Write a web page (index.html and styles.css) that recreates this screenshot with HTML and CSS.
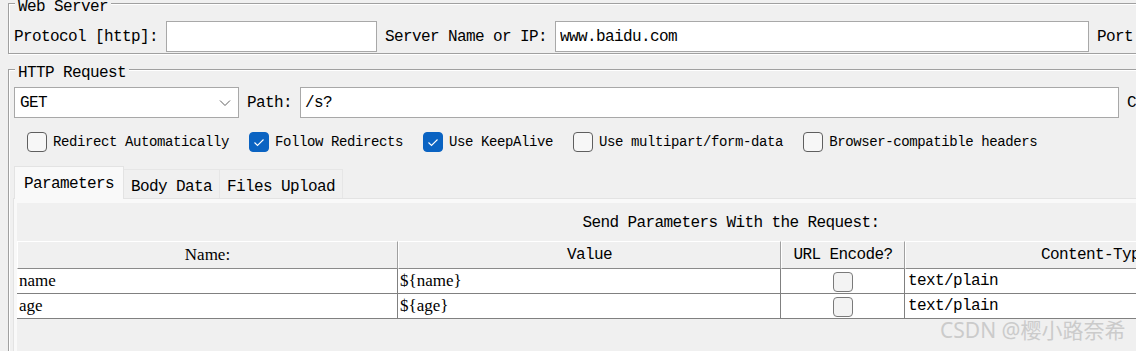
FILE: index.html
```html
<!DOCTYPE html>
<html lang="en">
<head>
    <meta charset="UTF-8">
    <title>HTTP Request</title>
    <link rel="stylesheet" href="styles.css">
</head>
<body>
    <div class="win">
        <!-- Web Server -->
        <div class="group">
            <div class="group-title">Web Server</div>
            <div class="row">
                <span class="lbl">Protocol [http]:</span>
                <input type="text" class="field f-proto" value="">
                <span class="lbl">Server Name or IP:</span>
                <input type="text" class="field f-host" value="www.baidu.com">
                <span class="lbl">Port Number:</span>
                <input type="text" class="field f-port" value="">
            </div>
        </div>

        <!-- HTTP Request -->
        <div class="group group-http">
            <div class="group-title">HTTP Request</div>
            <div class="row">
                <div class="combo">
                    <span>GET</span>
                    <svg class="chev" width="12" height="8" viewBox="0 0 12 8"><path d="M1 1.5 L6 6.5 L11 1.5" fill="none" stroke="#606060" stroke-width="1"/></svg>
                </div>
                <span class="lbl">Path:</span>
                <input type="text" class="field f-path" value="/s?">
                <span class="lbl">Content encoding:</span>
                <input type="text" class="field f-enc" value="">
            </div>

            <div class="checks">
                <span class="check"><span class="box"></span>Redirect Automatically</span>
                <span class="check"><span class="box on"><svg width="18" height="18" viewBox="0 0 18 18"><path d="M4.5 9.5 L7.5 12.5 L13.5 6.5" fill="none" stroke="#fff" stroke-width="1.1"/></svg></span>Follow Redirects</span>
                <span class="check"><span class="box on"><svg width="18" height="18" viewBox="0 0 18 18"><path d="M4.5 9.5 L7.5 12.5 L13.5 6.5" fill="none" stroke="#fff" stroke-width="1.1"/></svg></span>Use KeepAlive</span>
                <span class="check"><span class="box"></span>Use multipart/form-data</span>
                <span class="check"><span class="box"></span>Browser-compatible headers</span>
            </div>

            <div class="tabs">
                <div class="tab active t1">Parameters</div>
                <div class="tab t2">Body Data</div>
                <div class="tab t3">Files Upload</div>
            </div>
            <div class="pane">
                <div class="panel">
                    <div class="panel-title">Send Parameters With the Request:</div>
                    <table class="params">
                        <colgroup>
                            <col style="width: 381px">
                            <col style="width: 383px">
                            <col style="width: 124px">
                            <col style="width: 380px">
                            <col style="width: 160px">
                        </colgroup>
                        <tr>
                            <th class="serif">Name:</th>
                            <th>Value</th>
                            <th>URL Encode?</th>
                            <th>Content-Type</th>
                            <th>Include Equals?</th>
                        </tr>
                        <tr>
                            <td class="serif">name</td>
                            <td class="serif">${name}</td>
                            <td class="mid"><span class="cell-box"></span></td>
                            <td class="mono">text/plain</td>
                            <td class="mid"><span class="cell-box"></span></td>
                        </tr>
                        <tr>
                            <td class="serif">age</td>
                            <td class="serif">${age}</td>
                            <td class="mid"><span class="cell-box"></span></td>
                            <td class="mono">text/plain</td>
                            <td class="mid"><span class="cell-box"></span></td>
                        </tr>
                    </table>
                </div>
            </div>
        </div>

        <div class="watermark">CSDN @樱小路奈希</div>
    </div>
</body>
</html>
```

FILE: styles.css
```css
html, body{
    margin: 0;
    overflow: hidden;
    background: #f0f0f0;
}
body{
    font-family: "Liberation Mono", "DejaVu Sans Mono", monospace;
    font-size: 16px;
    letter-spacing: -0.6px;
    color: #000;
}
.win{
    position: relative;
    width: 1470px;
    padding-top: 3px;
}

/* etched group box */
.group{
    margin-left: 8px;
    border: 1px solid #a0a0a0;
    box-shadow: inset 1px 1px 0 #fff, 1px 1px 0 #fff;
    padding: 0 0 1px 5px;
}
.group-http{
    margin-top: 15px;
    padding-bottom: 80px;
}
.group-title{
    display: table;
    margin: -4px 0 0 1px;
    padding: 0 3px;
    line-height: 14px;
    background: #f0f0f0;
}

.row{
    display: flex;
    align-items: center;
    gap: 8px;
    margin-top: 7px;
    height: 31px;
}
.lbl{
    flex: none;
    white-space: nowrap;
}
.field{
    flex: none;
    box-sizing: border-box;
    height: 31px;
    margin: 0;
    padding: 0 4px;
    border: 1px solid #a8a8a8;
    background: #fff;
    font: inherit;
    letter-spacing: inherit;
    color: #000;
    outline: none;
}
.f-proto{ width: 211px; }
.f-host{ width: 534px; }
.f-port{ width: 120px; }
.f-path{ width: 819px; }
.f-enc{ width: 100px; }

.combo{
    flex: none;
    box-sizing: border-box;
    width: 225px;
    height: 31px;
    border: 1px solid #a8a8a8;
    background: #fff;
    display: flex;
    align-items: center;
    justify-content: space-between;
    padding: 0 7px 0 5px;
}
.chev{
    display: block;
}

/* checkbox row */
.checks{
    display: flex;
    align-items: center;
    height: 20px;
    margin-top: 14px;
    padding-left: 13px;
    font-size: 14px;
    letter-spacing: -0.4px;
}
.check{
    display: flex;
    align-items: center;
    margin-right: 20px;
    white-space: nowrap;
}
.box{
    flex: none;
    box-sizing: border-box;
    width: 20px;
    height: 20px;
    margin-right: 6px;
    border: 1px solid #5f5f5f;
    border-radius: 4px;
    background: #f7f7f7;
}
.box.on{
    background: #0a63c2;
    border-color: #0a63c2;
}
.box svg{
    display: block;
}

/* tabs */
.tabs{
    display: flex;
    align-items: flex-end;
    margin-top: 14px;
}
.tab{
    box-sizing: border-box;
    height: 29px;
    padding-top: 8px;
    line-height: 18px;
    text-align: center;
    border: 1px solid #e6e6e6;
    border-bottom: 0;
    background: #f0f0f0;
}
.tab.active{
    position: relative;
    height: 33px;
    margin-bottom: -1px;
    background: #f9f9f9;
    border-color: #e3e3e3;
}
.t1{ width: 110px; }
.t2{ width: 96px; border-left: 0; }
.t3{ width: 123px; border-left: 0; }

.pane{
    margin-left: -1px;
    border: 1px solid #e3e3e3;
    border-right: 0;
    background: #f9f9f9;
    padding: 4px 0 0 3px;
}
.panel{
    width: 1428px;
    background: #f0f0f0;
    padding-bottom: 60px;
}
.panel-title{
    padding: 11px 0 9px;
    line-height: 18px;
    text-align: center;
}

/* parameter table */
.params{
    border-collapse: separate;
    border-spacing: 0;
    table-layout: fixed;
    width: 1428px;
}
.params th{
    padding: 0;
    line-height: 26px;
    font-weight: normal;
    background: #f0f0f0;
    border-top: 1px solid #fff;
    border-left: 1px solid #fff;
    border-right: 1px solid #a0a0a0;
    border-bottom: 1px solid #8a8a8a;
    white-space: nowrap;
    overflow: hidden;
}
.params td{
    padding: 0 2px;
    height: 24px;
    line-height: 24px;
    background: #fff;
    border-right: 1px solid #808080;
    border-bottom: 1px solid #808080;
    white-space: nowrap;
    overflow: hidden;
}
.params .serif{
    font-family: "Liberation Serif", serif;
    font-size: 17px;
    letter-spacing: 0;
}
.params td.mono{
    padding-left: 3px;
}
.params td.mid{
    padding: 0;
}
.cell-box{
    display: block;
    box-sizing: border-box;
    width: 20px;
    height: 20px;
    margin: 2px auto 0;
    border: 1px solid #7a7a7a;
    border-radius: 4px;
    background: #f3f3f3;
}

.watermark{
    position: absolute;
    left: 940px;
    top: 318px;
    font-family: "Noto Sans", "Noto Sans CJK SC", sans-serif;
    font-size: 21px;
    line-height: 24px;
    letter-spacing: 0;
    color: #cbcbcb;
    white-space: nowrap;
}
```
